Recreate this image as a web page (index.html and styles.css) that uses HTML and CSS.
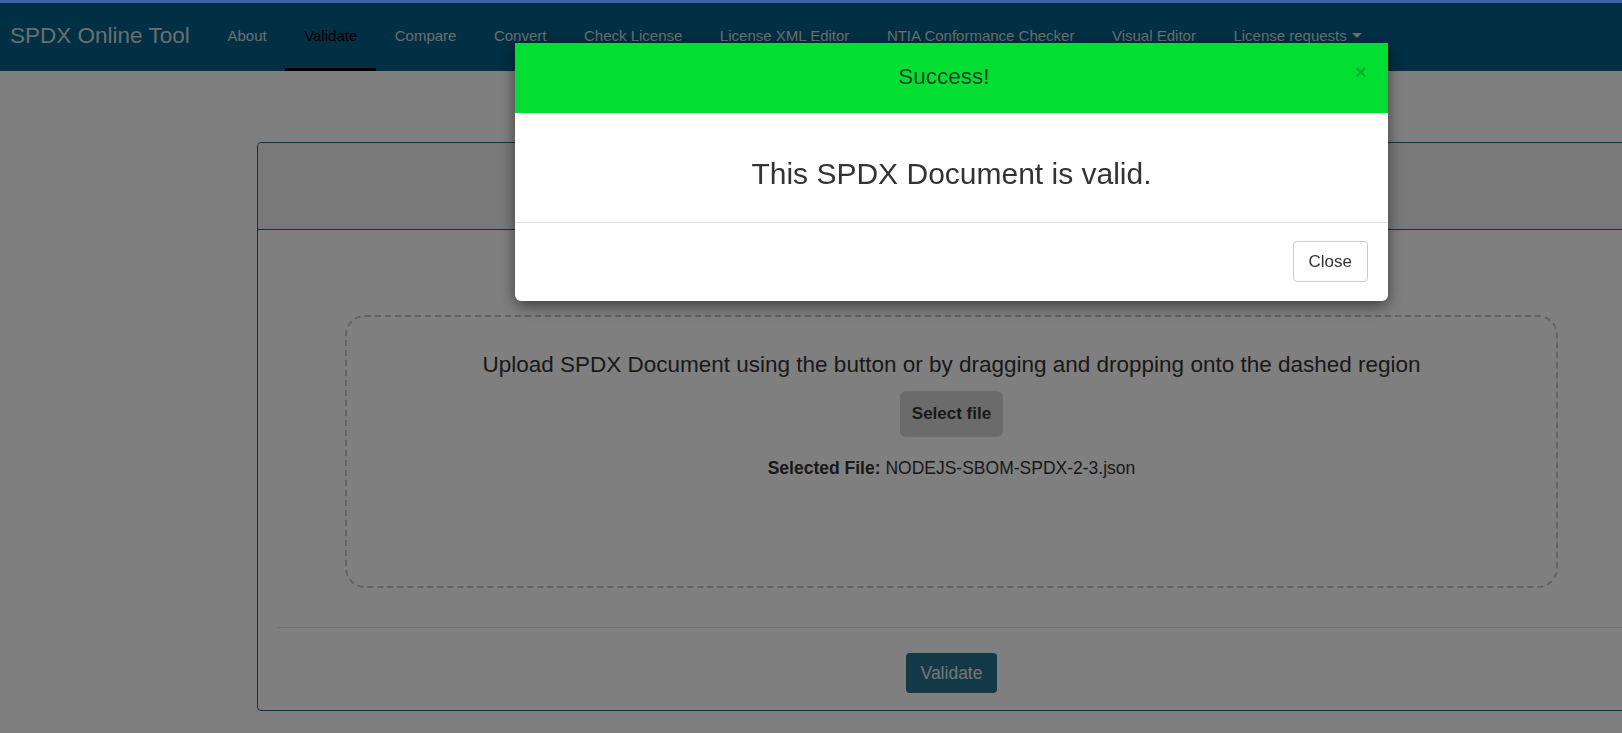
FILE: index.html
```html
<!DOCTYPE html>
<html lang="en">
<head>
<meta charset="utf-8">
<title>SPDX Online Tool - Validate</title>
<link rel="stylesheet" href="styles.css">
</head>
<body>
<div class="topbar"></div>
<div class="page">
  <nav class="navbar">
    <a class="brand" href="#">SPDX Online Tool</a>
    <ul class="nav">
      <li><a href="#">About</a></li>
      <li class="active"><a href="#">Validate</a></li>
      <li><a href="#">Compare</a></li>
      <li><a href="#">Convert</a></li>
      <li><a href="#">Check License</a></li>
      <li><a href="#">License XML Editor</a></li>
      <li><a href="#">NTIA Conformance Checker</a></li>
      <li><a href="#">Visual Editor</a></li>
      <li><a href="#">License requests <span class="caret"></span></a></li>
    </ul>
  </nav>
  <main class="content">
    <section class="panel">
      <div class="panel-heading"></div>
      <div class="panel-body">
        <div class="dropzone">
          <p class="drop-text">Upload SPDX Document using the button or by dragging and dropping onto the dashed region</p>
          <button class="select-btn" type="button">Select file</button>
          <p class="selected"><b>Selected File:</b> NODEJS-SBOM-SPDX-2-3.json</p>
        </div>
        <div class="sep"></div>
        <div class="actions">
          <button class="validate-btn" type="button">Validate</button>
        </div>
      </div>
    </section>
  </main>
</div>
<div class="backdrop"></div>
<div class="modal">
  <div class="modal-dialog">
    <div class="modal-header">
      <h4 class="modal-title">Success!</h4>
      <button class="close" type="button">&times;</button>
    </div>
    <div class="modal-body">
      <h3 class="modal-msg">This SPDX Document is valid.</h3>
    </div>
    <div class="modal-footer">
      <button class="close-btn" type="button">Close</button>
    </div>
  </div>
</div>
</body>
</html>
```

FILE: styles.css
```css
html, body {
  margin: 0;
  padding: 0;
  overflow: hidden;
  background: #fff;
  font-family: "Liberation Sans", Arial, sans-serif;
  color: #333;
}

.topbar {
  position: relative;
  z-index: 1060;
  height: 3px;
  background: #3e60ae;
}

.page {
  position: relative;
  z-index: 0;
  width: 1903px;
}

/* navbar */
.navbar {
  display: flex;
  align-items: stretch;
  height: 68px;
  background: #035f86;
}

.brand {
  display: flex;
  align-items: center;
  padding: 0 19px 2px 10px;
  font-size: 22.5px;
  color: #d4dce1;
  text-decoration: none;
}

.nav {
  display: flex;
  list-style: none;
  margin: 0;
  padding: 0;
}

.nav li {
  display: flex;
}

.nav a {
  display: flex;
  align-items: center;
  padding: 0 18.75px 3px;
  font-size: 15px;
  color: #d4dce1;
  text-decoration: none;
}

.nav .active a {
  color: #000;
  box-shadow: inset 0 -3px 0 #000;
}

.caret {
  display: inline-block;
  width: 0;
  height: 0;
  margin-left: 5px;
  border-top: 5px solid #d4dce1;
  border-left: 5px solid transparent;
  border-right: 5px solid transparent;
}

/* panel */
.content {
  padding: 71px 257px 0;
}

.panel {
  border: 1px solid #1f6787;
  border-radius: 4px;
  background: #fff;
}

.panel-heading {
  height: 86px;
  background: #f3f3f3;
  border-bottom: 1px solid #1f6787;
  border-radius: 4px 4px 0 0;
}

.panel-body {
  padding: 85px 19px 17px;
}

.dropzone {
  box-sizing: border-box;
  height: 273px;
  margin: 0 68px;
  padding-top: 33px;
  border: 2px dashed #c4c4c4;
  border-radius: 20px;
  display: flex;
  flex-direction: column;
  align-items: center;
  text-align: center;
}

.drop-text {
  margin: 0;
  font-size: 22.5px;
  line-height: 30px;
  color: #333;
}

.select-btn {
  margin-top: 11px;
  padding: 12px;
  border: none;
  border-radius: 6px;
  background: #d6d6d6;
  color: #333;
  font-family: "Liberation Sans", Arial, sans-serif;
  font-weight: bold;
  font-size: 17px;
  line-height: 22px;
}

.selected {
  margin: 19px 0 0;
  font-size: 17.5px;
  line-height: 25px;
  color: #333;
}

.sep {
  margin-top: 39px;
  border-top: 1px solid #e6e6e6;
}

.actions {
  display: flex;
  justify-content: center;
  padding-top: 25px;
}

.validate-btn {
  width: 91px;
  height: 40px;
  padding: 0;
  border: none;
  border-radius: 4px;
  background: #26708f;
  color: #e8eef2;
  font-family: "Liberation Sans", Arial, sans-serif;
  font-size: 17.5px;
}

/* modal */
.backdrop {
  position: fixed;
  top: 0;
  left: 0;
  right: 0;
  bottom: 0;
  z-index: 1040;
  background: rgba(0, 0, 0, 0.5);
}

.modal {
  position: fixed;
  top: 0;
  left: 0;
  bottom: 0;
  z-index: 1050;
  width: 1903px;
}

.modal-dialog {
  width: 873px;
  margin: 43px 0 0 515px;
  background: #fff;
  border-radius: 0 0 6px 6px;
  box-shadow: 0 5px 15px rgba(0, 0, 0, 0.5);
}

.modal-header {
  display: flex;
  align-items: center;
  box-sizing: border-box;
  height: 70px;
  padding: 0 21px 3px 18px;
  background: #03df32;
}

.modal-title {
  flex: 1;
  margin: 0;
  text-align: center;
  font-size: 22.5px;
  line-height: 22px;
  font-weight: normal;
  color: #1f3a25;
}

.close {
  align-self: flex-start;
  margin-top: 18px;
  padding: 0;
  border: none;
  background: transparent;
  font-family: "Liberation Sans", Arial, sans-serif;
  font-size: 21px;
  font-weight: bold;
  line-height: 21px;
  color: #000;
  opacity: 0.2;
}

.modal-body {
  padding: 44px 15px 32px;
  text-align: center;
}

.modal-msg {
  margin: 0;
  font-size: 30px;
  line-height: 33px;
  font-weight: normal;
  color: #333;
}

.modal-footer {
  display: flex;
  justify-content: flex-end;
  padding: 18px 20px 19px;
  border-top: 1px solid #e5e5e5;
}

.close-btn {
  padding: 8px 15px;
  border: 1px solid #ccc;
  border-radius: 4px;
  background: #fff;
  color: #333;
  font-family: "Liberation Sans", Arial, sans-serif;
  font-size: 17px;
  line-height: 23px;
}
```
